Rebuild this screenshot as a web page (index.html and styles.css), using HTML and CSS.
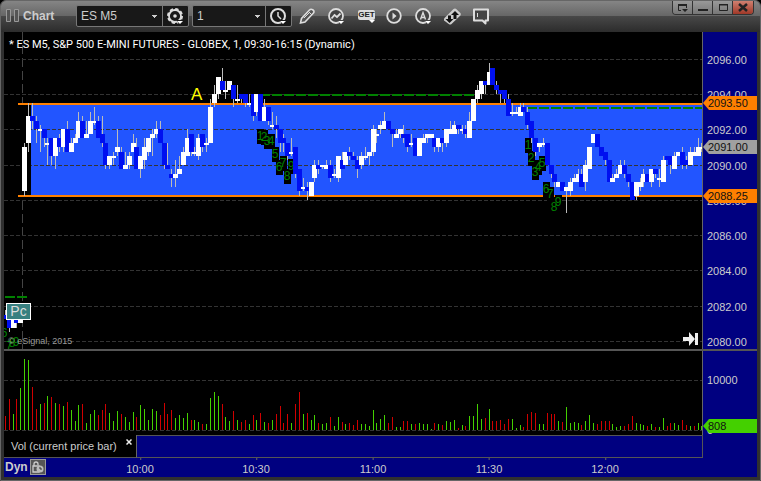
FILE: index.html
```
<!DOCTYPE html>
<html lang="en">
<head>
    <meta charset="UTF-8">
    <meta name="viewport" content="width=device-width, initial-scale=1.0">
    <title>Chart - ES M5</title>
    <link rel="stylesheet" href="styles.css">
</head>
<body>
    <div class="window">
        <header class="toolbar">
            <svg class="grip" width="14" height="14" viewBox="0 0 14 14"><path d="M.5 .5h4v12h-4zM8.500 .5h4v12h-4z" fill="#555" stroke="#999"/></svg>
            <h1 class="window-title">Chart</h1>
            <div class="field-group symbol-group">
                <select class="field" aria-label="Symbol"><option>ES M5</option></select>
                <button class="group-btn" aria-label="Symbol settings">
                    <svg width="18" height="18" viewBox="0 0 18 18"><circle cx="8" cy="8" r="6" fill="none" stroke="#ddd" stroke-width="1.800"/><circle cx="8" cy="8" r="7" fill="none" stroke="#ddd" stroke-width="2" stroke-dasharray="3.300 2.200"/><circle cx="8" cy="8" r="1.800" fill="#ddd"/><path d="M9 12h8l-4 5z" fill="#181818"/><path d="M10 13h6l-3 3z" fill="#fff"/></svg>
                </button>
            </div>
            <div class="field-group interval-group">
                <select class="field" aria-label="Interval"><option>1</option></select>
                <button class="group-btn" aria-label="Time template">
                    <svg width="18" height="18" viewBox="0 0 18 18"><circle cx="8" cy="8" r="7" fill="none" stroke="#ddd" stroke-width="2"/><path d="M8 4v4l3 3" fill="none" stroke="#ddd" stroke-width="1.500"/><path d="M9 12h8l-4 5z" fill="#181818"/><path d="M10 13h6l-3 3z" fill="#fff"/></svg>
                </button>
            </div>
            <nav class="tools">
                <button class="tool" aria-label="Draw"><svg width="18" height="18" viewBox="0 0 18 18"><path d="M1.500 15l1-4.500L10.500 2q1.500-1.500 3.500 0t0 3.500L6 14z" fill="#555" stroke="#ddd" stroke-width="1.600"/><path d="M10 4l3 3M5 10l5-5" stroke="#ddd"/></svg></button>
                <button class="tool" aria-label="Studies"><svg width="18" height="18" viewBox="0 0 18 18"><circle cx="8" cy="8" r="7" fill="#444" stroke="#ddd" stroke-width="1.800"/><path d="M3.500 10.500l3-3.500 2.500 2 3.500-3.500" fill="none" stroke="#ddd" stroke-width="1.800"/><path d="M9 12h8l-4 5z" fill="#444"/><path d="M10 13h6l-3 3z" fill="#fff"/></svg></button>
                <button class="tool get" aria-label="Get studies"><span class="get-label">GET</span><svg width="6" height="4" viewBox="0 0 6 4"><path d="M0 0h6L3 3z" fill="#fff"/></svg></button>
                <button class="tool" aria-label="Playback"><svg width="18" height="18" viewBox="0 0 18 18"><circle cx="8" cy="8" r="6.800" fill="#444" stroke="#ddd" stroke-width="1.800"/><path d="M6.500 4.500l4 3.500-4 3.500z" fill="#ddd"/></svg></button>
                <button class="tool" aria-label="Alerts"><svg width="18" height="18" viewBox="0 0 18 18"><circle cx="8" cy="8" r="7" fill="#444" stroke="#ddd" stroke-width="1.800"/><path d="M5.500 11.500L8 4.500l2.500 7M6.200 9.500h3.600" fill="none" stroke="#ddd" stroke-width="1.400"/><path d="M9 12h8l-4 5z" fill="#444"/><path d="M10 13h6l-3 3z" fill="#fff"/></svg></button>
                <button class="tool" aria-label="Trade"><svg width="18" height="18" viewBox="0 0 18 18"><path d="M0 10.500L9.500 1q1.200-1 2.400-.2l4.500 4.200q.8 1.200 0 2.400L7.500 16q-1.200 1-2.400.2L0 12.500q-.6-1 0-2z" fill="#ccc"/><path d="M11 3l4 4h-2.500v4h-3V7H7zM5.500 15l-4-4H4V7.500h3V11h2.500z" fill="#111"/></svg></button>
                <button class="tool" aria-label="Notes"><svg width="18" height="18" viewBox="0 0 18 18"><path d="M1 1.500h14v11h-2.500v3L9.500 12.500H1z" fill="#444" stroke="#ddd" stroke-width="2" stroke-linejoin="round"/><path d="M4.500 5v4" stroke="#ddd"/></svg></button>
            </nav>
            <div class="window-buttons">
                <button class="win-btn" aria-label="Dock"><svg width="12" height="10" viewBox="0 0 12 10"><path d="M4 7.500H1.500v-6h8V5" fill="none" stroke="#222"/><path d="M1 1h9v2H1zM5 6h6L8 9z" fill="#222"/></svg></button>
                <button class="win-btn" aria-label="Minimize"><svg width="12" height="10" viewBox="0 0 12 10"><path d="M1 6h10v2H1z" fill="#222"/></svg></button>
                <button class="win-btn" aria-label="Maximize"><svg width="12" height="10" viewBox="0 0 12 10"><path d="M2.500 1.500h8v6h-8z" fill="none" stroke="#222"/><path d="M2 1h9v1.500H2z" fill="#222"/></svg></button>
                <button class="win-btn close" aria-label="Close"><svg width="12" height="10" viewBox="0 0 12 10"><path d="M2 1l8 7M10 1L2 8" stroke="#222" stroke-width="2.500"/></svg></button>
            </div>
        </header>

        <main class="chart">
            <section class="pane price-pane">
                <div class="plot">
                    <svg class="canvas" id="priceCanvas"></svg>
                    <h2 class="study-title">* ES M5, S&amp;P 500 E-MINI FUTURES - GLOBEX, 1, 09:30-16:15 (Dynamic)</h2>
                    <span class="point-label">A</span>
                    <span class="pc-label">Pc</span>
                    <small class="copyright">© eSignal, 2015</small>
                    <button class="jump-end" aria-label="Go to latest bar"><svg width="16" height="14" viewBox="0 0 16 14"><path d="M0 5h6V0l6 7-6 7V9H0z" fill="#eee"/><path d="M12 1h3v12h-3z" fill="#eee"/></svg></button>
                </div>
                <div class="scale" id="priceScale"></div>
            </section>
            <section class="pane volume-pane">
                <div class="plot">
                    <svg class="canvas" id="volumeCanvas"></svg>
                </div>
                <div class="scale" id="volumeScale"></div>
            </section>
            <div class="tabs">
                <div class="tab">Vol (current price bar) <button class="tab-close" aria-label="Close tab"><svg width="6" height="6" viewBox="0 0 6 6"><path d="M.5 .5l5 5M5.500 .5l-5 5" stroke="#eee" stroke-width="1.500"/></svg></button></div>
                <div class="tab-rest"></div>
                <div class="tab-end"></div>
            </div>
            <footer class="time-axis" id="timeAxis">
                <strong class="dyn">Dyn</strong>
                <button class="lock" aria-label="Lock scale"><svg width="14" height="14" viewBox="0 0 14 14"><path d="M2 6h6v6H2zM3 6V4q0-2 2-2t2 2v1" fill="none" stroke="#ccc" stroke-width="1.300"/><circle cx="9" cy="9" r="3.500" fill="#bbb"/><path d="M9 7v2h2" fill="none" stroke="#333"/></svg></button>
            </footer>
        </main>
    </div>
    <script src="chart.js"></script>
</body>
</html>
```

FILE: styles.css
```
* {
    box-sizing: border-box;
}
body {
    margin: 0;
    background: #000;
    font-family: "Liberation Sans", Arial, sans-serif;
    font-size: 11px;
    color: #ccc;
}
button {
    padding: 0;
    border: none;
    background: none;
    font: inherit;
    color: inherit;
    cursor: pointer;
}
svg {
    display: block;
}
.window {
    display: flex;
    flex-direction: column;
    min-height: 100vh;
    padding: 0 3px 3px;
    background: #303030;
    border: 1px solid #666;
    border-radius: 6px 6px 0 0;
}

/* toolbar */
.toolbar {
    display: flex;
    align-items: flex-start;
    height: 31px;
    margin: 0 -3px;
    padding-left: 5px;
    background: linear-gradient(#858585, #666 15px, #484848 15px, #2c2c2c);
    border-radius: 5px 5px 0 0;
}
.grip {
    margin-top: 8px;
}
.window-title {
    width: 53px;
    margin: 7px 0 0 3px;
    font-size: 12px;
    line-height: 16px;
    color: #ccc;
}
.field-group {
    display: flex;
    height: 22px;
    margin: 4px 3px 0 0;
    background: #181818;
    border: 1px solid #777;
    border-radius: 2px;
}
.symbol-group {
    width: 113px;
}
.interval-group {
    width: 100px;
}
.field {
    flex: 1;
    min-width: 0;
    padding: 0 4px;
    border: none;
    appearance: none;
    background: linear-gradient(#ccc, #ccc) right 5px top 9px / 5px 1px no-repeat,
        linear-gradient(#ccc, #ccc) right 6px top 10px / 3px 1px no-repeat,
        linear-gradient(#ccc, #ccc) right 7px top 11px / 1px 1px no-repeat;
    font-family: inherit;
    font-size: 12px;
    color: #ccc;
}
.group-btn {
    width: 26px;
    padding: 1px 0 0 4px;
    border-left: 1px solid #777;
}
.tools {
    display: flex;
    gap: 11px;
    margin: 7px 0 0 4px;
}
.tool {
    width: 18px;
    height: 18px;
}
.get {
    display: flex;
    flex-direction: column;
    align-items: flex-end;
}
.get-label {
    width: 17px;
    margin-top: 2px;
    background: #ddd;
    border-radius: 2px;
    font-size: 8px;
    font-weight: bold;
    line-height: 10px;
    text-align: center;
    color: #222;
}
.window-buttons {
    display: flex;
    margin: 0 6px 0 auto;
    border: 1px solid #333;
    border-top: none;
    border-radius: 0 0 4px 4px;
    overflow: hidden;
}
.win-btn {
    display: grid;
    place-items: center;
    width: 20px;
    height: 13px;
    background: linear-gradient(#999, #777);
    border-right: 1px solid #333;
}
.win-btn.close {
    border-right: none;
    background: linear-gradient(#d08070, #a03828);
}

/* chart */
.chart {
    flex: 1;
    display: flex;
    flex-direction: column;
    background: #000;
}
.pane {
    display: flex;
}
.price-pane {
    flex: 1;
    min-height: 317px;
}
.volume-pane {
    height: 86px;
    border-top: 2px solid #555;
}
.plot {
    position: relative;
    flex: 1;
    overflow: hidden;
    border-right: 1px solid #666;
}
.canvas {
    position: absolute;
    inset: 0;
    width: 100%;
    height: 100%;
    shape-rendering: crispEdges;
}
.scale {
    position: relative;
    width: 54px;
    overflow: hidden;
    background: #000080;
}
.scale-label {
    position: absolute;
    left: 4px;
    line-height: 14px;
    transform: translateY(-50%);
}
.price-tag {
    position: absolute;
    left: 0;
    width: 100%;
    padding-left: 5px;
    line-height: 14px;
    color: #111;
    transform: translateY(-50%);
    clip-path: polygon(6px 0, 100% 0, 100% 100%, 6px 100%, 0 50%);
}
.orange {
    background: #ff8000;
}
.gray {
    background: #a0a0a0;
}
.green {
    background: #44d000;
}
.study-title {
    position: absolute;
    left: 5px;
    top: 6px;
    margin: 0;
    font-family: Roboto, "Liberation Sans", sans-serif;
    font-size: 11px;
    font-weight: normal;
    line-height: 13px;
    white-space: nowrap;
    color: #fff;
}
.point-label {
    position: absolute;
    left: 187px;
    top: 54px;
    font-size: 17px;
    line-height: 18px;
    color: #ff0;
}
.pc-label {
    position: absolute;
    left: 2px;
    top: 271px;
    width: 25px;
    background: #388080;
    border: 1px solid #fff;
    font-size: 14px;
    line-height: 15px;
    text-align: center;
    color: #ddd;
}
.copyright {
    position: absolute;
    left: 4px;
    top: 303px;
    font-size: 9px;
    line-height: 12px;
    color: #999;
}
.jump-end {
    position: absolute;
    right: 3px;
    top: 300px;
}

/* svg parts */
.grid {
    stroke: #333;
    stroke-dasharray: 4 2;
}
.session {
    stroke: #444;
    stroke-dasharray: 9 4;
}
.band {
    fill: #2255ff;
}
.level {
    stroke: #ff8000;
    stroke-width: 2;
}
.trend {
    stroke: #008000;
    stroke-width: 2;
    stroke-dasharray: 10 2;
}
.wick {
    fill: #bbb;
}
.up {
    fill: #fff;
}
.down {
    fill: #0010f0;
}
.count-box {
    fill: #000;
}
.count {
    fill: #008000;
    font-size: 12px;
    text-anchor: middle;
}
.vol-up {
    fill: #44d000;
}
.vol-down {
    fill: #d00000;
}

/* bottom */
.tabs {
    display: flex;
    height: 23px;
    background: #000080;
}
.tab {
    display: flex;
    justify-content: space-between;
    width: 133px;
    padding: 4px 4px 0 7px;
    background: #000;
    border-right: 1px solid #666;
    border-bottom: 1px solid #555;
    line-height: 15px;
}
.tab-close {
    height: 6px;
}
.tab-rest {
    flex: 1;
    border: solid #555;
    border-width: 1px 1px 1px 0;
}
.tab-end {
    width: 54px;
}
.time-axis {
    position: relative;
    display: flex;
    gap: 2px;
    height: 19px;
    padding: 1px 0 0 1px;
    background: #000080;
}
.dyn {
    font-size: 12px;
    line-height: 16px;
}
.lock {
    width: 16px;
    height: 16px;
    background: #555;
    border: 1px solid #999;
}
.time-label {
    position: absolute;
    top: 5px;
    line-height: 13px;
    transform: translateX(-50%);
}
.time-label::before {
    content: "";
    position: absolute;
    left: 50%;
    top: -5px;
    width: 1px;
    height: 2px;
    background: #666;
}
```

FILE: chart.js
```
// One entry per minute bar: direction (u/d), then high, body top, body bottom
// and low, counted in quarter-point ticks below 2096.00
const bars = `
d57 58 59 59,d59 59 61 62,u59 59 61 61,d58 59 60 61,u57 58 60 60,
u19 20 30 31,u10 13 19 21,d10 13 14 16,d13 14 16 19,u15 16 16 21,d16 16 18 20,u18 19 19 24,d18 18 22 24,u18 18 22 25,d17 18 20 21,
u16 16 20 21,d14 16 21 21,u18 19 21 21,u17 18 19 19,u12 14 18 18,d13 14 18 18,u14 17 18 18,u12 14 17 17,u11 14 14 15,d13 14 18 18,
d13 17 19 20,d19 19 24 25,u22 22 24 25,u21 22 22 24,u16 20 21 22,d20 21 25 25,u21 24 25 25,u21 22 24 25,u17 19 21 21,d18 20 25 25,
u22 22 25 27,u18 20 23 25,u18 18 21 22,u16 17 18 22,u14 16 17 18,d14 16 19 19,d19 19 24 25,d19 24 25 25,d25 26 27 29,u23 26 27 29,
u22 25 26 26,u20 21 24 24,u16 18 22 22,d17 17 21 22,u20 21 21 22,u17 18 22 23,d17 17 20 21,u18 19 19 21,u9 11 19 19,u6 8 10 11,
u4 4 8 9,d2 5 7 7,u5 7 7 9,u5 5 7 7,d6 6 9 11,u6 9 9 10,d8 8 9 10,d8 8 10 11,u8 10 10 11,d8 8 13 14,
u8 8 12 13,d8 8 14 14,u9 11 14 14,d11 11 14 15,u12 15 15 16,d13 15 16 18,d16 16 19 21,d17 18 19 21,d19 19 22 23,u18 21 21 22,
d20 20 26 27,d25 25 30 31,u27 29 29 30,d28 29 30 32,u28 28 31 31,u23 24 27 28,d23 24 25 26,u24 24 24 25,u23 24 25 25,d23 24 27 28,
u25 26 26 27,u22 22 27 28,d21 23 25 25,u21 21 24 24,d20 21 22 23,d21 22 23 23,d22 23 25 27,u21 22 24 25,u20 22 22 23,u21 21 22 24,
u15 16 21 22,u16 17 17 19,u14 15 16 17,u12 14 16 16,d14 14 16 16,d16 16 17 20,u16 17 18 18,u16 16 17 18,d15 17 18 19,d17 17 20 21,
u17 19 19 20,d18 18 22 22,u18 18 22 22,u17 18 19 19,u17 17 18 19,u17 17 18 18,d18 18 20 21,u18 18 20 21,d18 18 19 21,u16 16 19 20,
u14 16 17 17,u14 15 17 17,d15 15 16 17,u15 16 16 17,d15 16 17 18,u12 14 18 18,u9 9 14 14,u6 7 9 10,u5 5 8 9,d5 5 6 8,
u1 3 6 6,d2 2 6 6,d5 6 7 8,d7 7 8 10,d7 7 9 10,d8 9 13 13,u10 12 12 13,u11 12 12 12,u10 11 13 13,d10 11 12 12,
d11 12 15 16,d14 14 18 19,d18 18 21 22,u19 19 20 21,u18 19 19 20,d19 19 24 24,d24 24 26 27,d26 26 28 29,u28 28 29 29,d28 28 30 30,
u29 29 30 35,u27 28 30 31,u26 27 28 28,u25 26 28 28,d25 26 29 29,u23 24 28 30,u20 20 25 25,u17 17 19 19,d17 17 20 20,d20 20 22 22,
d21 21 23 24,d23 23 28 28,u26 27 28 28,u25 26 27 27,u23 24 26 26,d23 24 26 27,d26 26 28 29,d28 28 32 32,u28 28 31 32,u27 28 29 30,
u25 26 28 29,d26 26 28 28,u25 25 28 29,d25 25 26 27,u25 27 27 29,u22 23 28 28,d22 22 23 23,d22 22 24 26,u21 22 25 25,u21 21 22 22,
d20 21 24 25,d22 23 24 25,u20 21 24 24,u20 21 22 22,u18 20 22 22,u19 20 20 21`.trim().split(/,\s*/);

// Volume per bar, in units of 200 contracts
const volumes = `
d14 d31 u16 d31 u42
u71 u70 d43 d21 u26 d27 u34 d33 u27 d26 u24 d28 u20 u9 u25 d26 u7 u16 u20 d15 d20 d26 u17 u9 u19
d16 u13 u8 u18 d13 u25 u21 u10 u21 u19 d15 d27 d16 d20 u12 u15 u12 u17 d10 u10 u8 d6 u6 u32 u38
u34 d26 u13 u9 d19 u10 d8 d10 u6 d15 u10 d17 u8 d7 u10 d16 d24 d7 d16 u7 d26 d38 u16 d17 u10
u15 d7 u6 u7 d13 u4 u13 d8 u6 d7 d5 d10 u6 u6 u4 u20 u7 u11 u15 d7 d13 u3 u3 d9 d9
u6 d6 u7 u6 u6 u1 d7 u6 d5 u9 u8 u10 d2 u5 d4 u14 u14 u26 u11 d12 u21 d9 d9 d10 d6
d11 u11 u2 u5 d3 d16 d18 d17 u6 u6 d17 d16 d16 u9 d8 u23 u7 u8 u7 d5 u9 u15 u7 d6 d9
d9 d9 u6 u3 u4 d4 d6 d14 u7 u6 u5 d4 u6 d3 u3 u12 d4 d7 u7 u5 d10 d5 u4 d4 u7 u4`.trim().split(/\s+/);

// Countdown numbers: digit, centre x, centre y
const counts = [
    [6, 0, 301], [7, 5, 314], [8, 8, 311], [9, 12, 310],
    [1, 256, 104], [2, 260, 105], [3, 263, 109], [4, 267, 109], [5, 271, 122],
    [6, 275, 135], [9, 287, 134], [7, 279, 131], [8, 283, 144],
    [1, 524, 113], [2, 527, 126], [3, 531, 140], [4, 534, 135], [5, 538, 131],
    [6, 542, 157], [7, 546, 162], [8, 550, 175], [9, 554, 170]
];

const FIRST = -5; // bars before the session open
const barX = i => Math.round(20.2 + 3.87 * i);
const tickY = t => Math.round(27 + 4.406 * t);
const priceY = p => tickY((2096 - p) * 4);

const rect = (cls, x, y, w, h) => `<rect class="${cls}" x="${x}" y="${y}" width="${w}" height="${h}"/>`;
const line = (cls, x1, y1, x2, y2) => `<line class="${cls}" x1="${x1}" y1="${y1}" x2="${x2}" y2="${y2}"/>`;

function drawPrice() {
    const prices = [2096, 2094, 2092, 2090, 2088, 2086, 2084, 2082, 2080];
    let out = line('session', 18.5, 0, 18.5, '100%');
    out += rect('band', 27, 73, '100%', 90);
    out += prices.map(p => line('grid', 0, priceY(p) + 0.5, '100%', priceY(p) + 0.5)).join('');
    out += line('trend', 256, 63, 474, 63) + line('trend', 523, 76, '100%', 76) + line('trend', 1, 265, 24, 265);
    out += line('level', 14, 72, '100%', 72) + line('level', 14, 164, '100%', 164);
    out += rect('count-box', 18, 73, 9, 90);
    counts.forEach(([n, x, y]) => {
        out += rect('count-box', x - 3, y - 7, 7, 15);
    });
    counts.forEach(([n, x, y]) => {
        out += `<text class="count" x="${x}" y="${y + 4}">${n}</text>`;
    });
    bars.forEach((bar, i) => {
        const x = barX(i + FIRST);
        const [high, top, bottom, low] = bar.slice(1).split(' ').map(t => tickY(+t));
        out += rect('wick', x, high, 1, low - high);
        out += rect(bar[0] === 'u' ? 'up' : 'down', x - 2, top, 5, Math.max(bottom - top, 2));
    });
    document.getElementById('priceCanvas').innerHTML = out;

    const labels = prices.map(p => `<span class="scale-label" style="top: ${priceY(p) + 1}px">${p.toFixed(2)}</span>`);
    const tags = [[2093.5, 'orange'], [2091, 'gray'], [2088.25, 'orange']]
        .map(([p, cls]) => `<span class="price-tag ${cls}" style="top: ${priceY(p)}px">${p.toFixed(2)}</span>`);
    document.getElementById('priceScale').innerHTML = labels.join('') + tags.join('');
}

function drawVolume() {
    let out = line('grid', 0, 29.5, '100%', 29.5) + line('grid', 0, 79.5, '100%', 79.5);
    volumes.forEach((v, i) => {
        const h = +v.slice(1);
        out += rect(v[0] === 'u' ? 'vol-up' : 'vol-down', barX(i + FIRST), 79 - h, 1, h);
    });
    document.getElementById('volumeCanvas').innerHTML = out;
    document.getElementById('volumeScale').innerHTML =
        '<span class="scale-label" style="top: 29px">10000</span>' +
        '<span class="scale-label" style="top: 79px">0</span>' +
        '<span class="price-tag green" style="top: 75px">808</span>';
}

function drawTimes() {
    const times = ['10:00', '10:30', '11:00', '11:30', '12:00'];
    document.getElementById('timeAxis').insertAdjacentHTML('beforeend', times.map((t, i) =>
        `<time class="time-label" style="left: ${barX((i + 1) * 30)}px">${t}</time>`).join(''));
}

drawPrice();
drawVolume();
drawTimes();
```
